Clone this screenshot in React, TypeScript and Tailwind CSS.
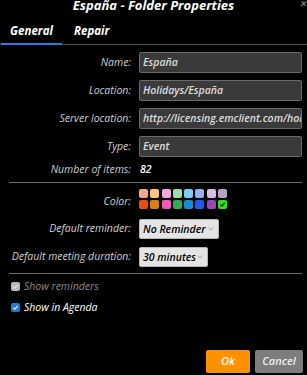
const topColors = ['#f7a58a', '#fcc47c', '#f8a6da', '#97deaa', '#7ccdf7', '#90b2f3', '#d9bce6', '#b5a3c6'];
const bottomColors = ['#f04a0b', '#d8820b', '#f756c0', '#30ad52', '#0e8edd', '#1b5cf6', '#9b45c5', '#27e61d'];

function Field({ label, value }: { label: string; value: string }) {
  return (
    <>
      <div className="flex h-[21px] items-center justify-end text-[10.5px] text-[#cfcfcf]">{label}</div>
      <div className="flex h-[21px] items-center overflow-hidden whitespace-nowrap rounded-[2px] border border-[#6a6a6a] bg-[#3a3a3a] px-[3px] text-[10.5px] font-semibold text-[#dedede]">
        {value}
      </div>
    </>
  );
}

function Select({ value, width }: { value: string; width: string }) {
  return (
    <div
      className={`flex h-[20px] items-center justify-between whitespace-nowrap rounded-[2px] border border-[#b5b5b5] bg-[#e4e4e4] pl-[3px] pr-[4px] text-[10.5px] font-semibold leading-[14px] text-black ${width}`}
    >
      <span>{value}</span>
      <svg width="6" height="4" viewBox="0 0 6 4" aria-hidden="true" className="shrink-0">
        <path d="M0.5 0.5L3 3l2.5-2.5" fill="none" stroke="#9a9a9a" strokeWidth="0.9" />
      </svg>
    </div>
  );
}

function Check({ on }: { on: boolean }) {
  return (
    <span
      className={`flex h-[9px] w-[9px] items-center justify-center rounded-[2px] ${on ? 'bg-[#1d7ae6]' : 'bg-[#b8b8b8]'}`}
    >
      <svg width="7" height="7" viewBox="0 0 7 7" aria-hidden="true">
        <path d="M1.2 3.6L2.8 5.1L5.8 1.8" fill="none" stroke={on ? '#ffffff' : '#e8e8e8'} strokeWidth="1.1" />
      </svg>
    </span>
  );
}

export default function App() {
  return (
    <div className="relative flex h-[375px] w-[307px] flex-col overflow-hidden bg-black font-['Open_Sans',sans-serif] italic">
      <div className="-mt-[3px] h-[16px] text-center text-[13px] font-bold leading-[16px] text-white">
        España - Folder Properties
      </div>
      <span className="absolute -top-[3px] right-0 text-[9px] text-[#9a9a9a]">✕</span>

      <div className="flex border-b border-[#4e4e4e]">
        <div className="-mb-px ml-px w-[61px] border-b-2 border-[#1c7fe3] pt-[10px] pb-[4px] text-center text-[11.5px] font-bold leading-[16px] text-white">
          General
        </div>
        <div className="ml-[12px] pt-[10px] text-[11.5px] font-bold leading-[16px] text-white">Repair</div>
      </div>

      <div className="mt-[7px] grid grid-cols-[131px_163px] gap-x-2 gap-y-[7px]">
        <Field label="Name:" value="España" />
        <Field label="Location:" value="Holidays/España" />
        <Field label="Server location:" value="http://licensing.emclient.com/holidays" />
        <Field label="Type:" value="Event" />
      </div>

      <div className="mt-[5px] grid h-[16px] grid-cols-[131px_163px] items-center gap-x-2 text-[10.5px]">
        <div className="text-right text-[#cfcfcf]">Number of items:</div>
        <div className="pl-px font-semibold text-white">82</div>
      </div>

      <div className="mt-[4px] ml-[9px] h-px w-[293px] bg-[#6b6b6b]" />

      <div className="mt-[6px] grid grid-cols-[131px_163px] gap-x-2">
        <div className="flex items-center justify-end pt-[5px] text-[10.5px] text-[#cfcfcf]">Color:</div>
        <div className="flex flex-col gap-[2px]">
          <div className="flex gap-[2.25px]">
            {topColors.map((c) => (
              <span key={c} className="h-[9px] w-[9px] rounded-[2px]" style={{ backgroundColor: c }} />
            ))}
          </div>
          <div className="flex gap-[2.25px]">
            {bottomColors.map((c, i) => (
              <span
                key={c}
                className="flex h-[9px] w-[9px] items-center justify-center rounded-[2px]"
                style={{ backgroundColor: c }}
              >
                {i === 7 && (
                  <svg width="7" height="7" viewBox="0 0 7 7" aria-hidden="true">
                    <path d="M1.3 3.7L2.8 5.1L5.7 2" fill="none" stroke="#000" strokeWidth="1.1" />
                  </svg>
                )}
              </span>
            ))}
          </div>
        </div>
      </div>

      <div className="mt-[9px] grid grid-cols-[131px_163px] items-center gap-x-2 gap-y-[8px] text-[10.5px]">
        <div className="text-right text-[#cfcfcf]">Default reminder:</div>
        <Select value="No Reminder" width="w-[80px]" />
        <div className="text-right text-[#cfcfcf]">Default meeting duration:</div>
        <Select value="30 minutes" width="w-[69px]" />
      </div>

      <div className="mt-[6px] ml-[9px] h-px w-[293px] bg-[#6b6b6b]" />

      <div className="mt-[5px] flex h-[16px] items-center gap-[4px] pl-[11px] text-[10.5px] text-[#8c8c8c]">
        <Check on={false} />
        Show reminders
      </div>
      <div className="mt-[5px] flex h-[16px] items-center gap-[4px] pl-[11px] text-[10.5px] text-white">
        <Check on />
        Show in Agenda
      </div>

      <div className="mt-auto mb-[2px] flex justify-end gap-[5px] pr-[4px]">
        <button type="button" className="h-[23px] w-[44px] rounded-[2px] bg-[#ff9000] text-[11px] font-semibold italic text-white">
          Ok
        </button>
        <button type="button" className="h-[23px] w-[48px] rounded-[2px] bg-[#7d7d7d] text-[11px] font-semibold italic text-[#f0f0f0]">
          Cancel
        </button>
      </div>
    </div>
  );
}
